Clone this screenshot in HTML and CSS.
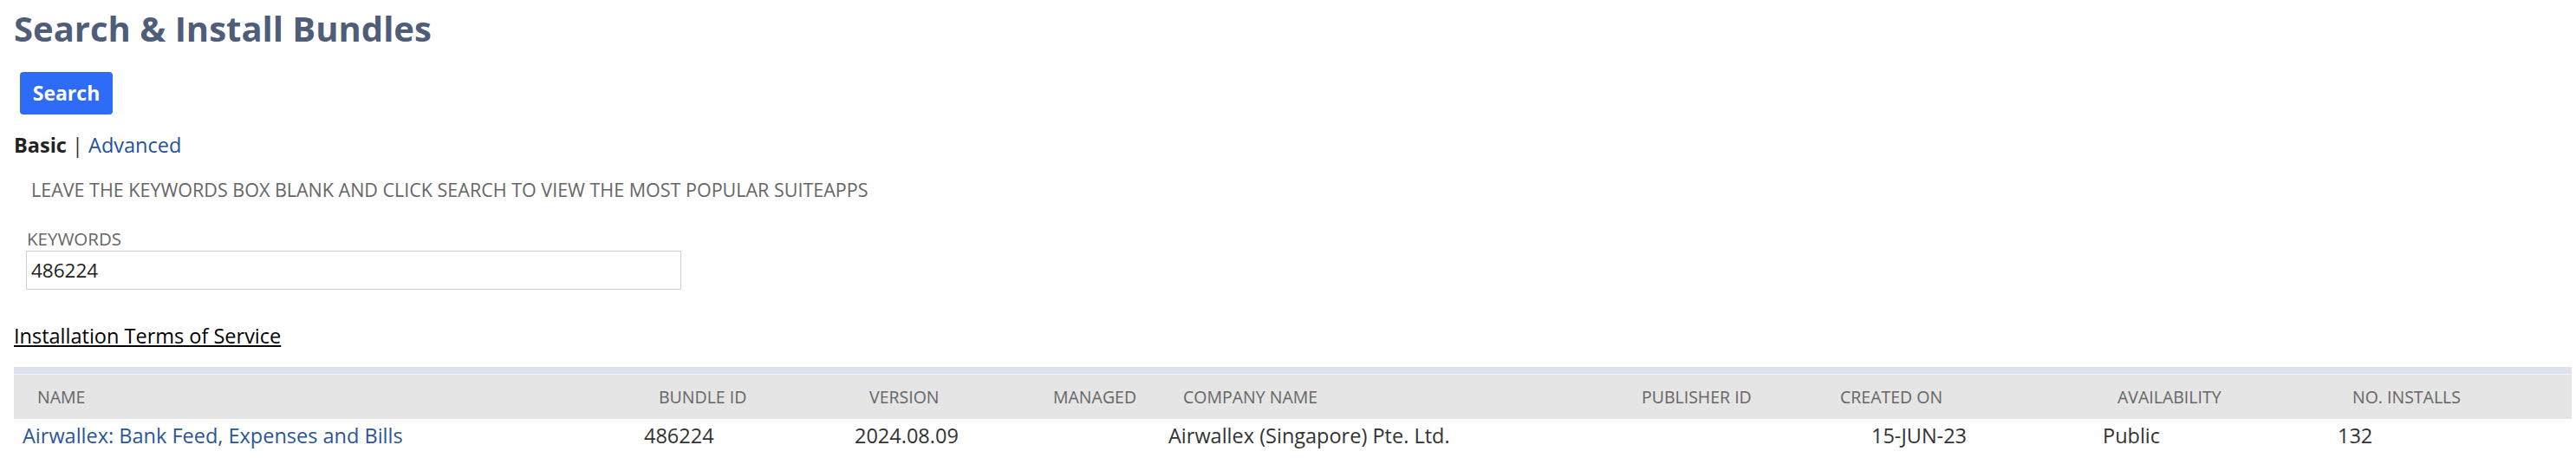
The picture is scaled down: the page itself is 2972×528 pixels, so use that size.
FILE: index.html
```html
<!DOCTYPE html>
<html>
<head>
<meta charset="utf-8">
<link rel="stylesheet" href="styles.css">
</head>
<body>
<div class="page">
  <h1 class="title">Search &amp; Install Bundles</h1>
  <div class="actions"><button class="btn">Search</button></div>
  <div class="tabs"><span class="tab-active">Basic</span> <span class="sep">|</span> <a class="tab-link" href="#">Advanced</a></div>
  <p class="hint">LEAVE THE KEYWORDS BOX BLANK AND CLICK SEARCH TO VIEW THE MOST POPULAR SUITEAPPS</p>
  <div class="field">
    <label class="field-label">KEYWORDS</label>
    <div class="input">486224</div>
  </div>
  <a class="terms" href="#">Installation Terms of Service</a>
  <div class="results">
    <div class="strip"></div>
    <div class="grid head">
      <div class="c c1">NAME</div>
      <div class="c c2">BUNDLE ID</div>
      <div class="c c3">VERSION</div>
      <div class="c c4">MANAGED</div>
      <div class="c c5">COMPANY NAME</div>
      <div class="c c6">PUBLISHER ID</div>
      <div class="c c7">CREATED ON</div>
      <div class="c c8">AVAILABILITY</div>
      <div class="c c9">NO. INSTALLS</div>
    </div>
    <div class="grid row">
      <div class="c c1"><a class="name-link" href="#">Airwallex: Bank Feed, Expenses and Bills</a></div>
      <div class="c c2">486224</div>
      <div class="c c3">2024.08.09</div>
      <div class="c c4"></div>
      <div class="c c5">Airwallex (Singapore) Pte. Ltd.</div>
      <div class="c c6"></div>
      <div class="c c7 date">15-JUN-23</div>
      <div class="c c8">Public</div>
      <div class="c c9">132</div>
    </div>
  </div>
</div>
</body>
</html>
```
FILE: styles.css
```css
html, body {
  margin: 0;
  padding: 0;
  background: #ffffff;
}
body {
  font-family: "Open Sans", "Liberation Sans", sans-serif;
  color: #333333;
}
.page {
  padding: 6px 5px 0 16px;
}
.title {
  margin: 0;
  font-size: 40px;
  line-height: 54px;
  font-weight: 700;
  color: #4f5d79;
}
.actions {
  margin-top: 23px;
  padding-left: 7px;
  display: flex;
}
.btn {
  font-family: "Open Sans", "Liberation Sans", sans-serif;
  font-size: 23px;
  font-weight: 700;
  line-height: 49px;
  height: 49px;
  width: 107px;
  padding: 0;
  border: 0;
  border-radius: 4px;
  background: #2e6bf6;
  color: #ffffff;
}
.tabs {
  margin-top: 20px;
  font-size: 23.5px;
  line-height: 30px;
  color: #222222;
}
.tab-active {
  font-weight: 700;
}
.sep {
  color: #333333;
}
.tab-link {
  color: #24519a;
  text-decoration: none;
}
.hint {
  margin: 23px 0 0 20px;
  font-size: 21.5px;
  line-height: 28px;
  color: #666666;
}
.field {
  margin-top: 30px;
  padding-left: 14px;
  display: flex;
  flex-direction: column;
  align-items: flex-start;
}
.field-label {
  font-size: 20.5px;
  line-height: 24px;
  color: #666666;
  padding-left: 1px;
}
.input {
  margin-top: 2px;
  box-sizing: border-box;
  width: 756px;
  height: 45px;
  border: 1px solid #cfcfcf;
  padding-left: 5px;
  font-size: 22.5px;
  line-height: 43px;
  color: #222222;
}
.terms {
  display: block;
  margin-top: 37px;
  font-size: 23.5px;
  line-height: 32px;
  color: #000000;
  text-decoration: underline;
  width: max-content;
}
.results {
  margin-top: 20px;
  width: 2951px;
}
.strip {
  height: 8px;
  background: #dfe3ec;
  border-bottom: 1px solid #f2f4f8;
}
.grid {
  display: grid;
  grid-template-columns: 717px 243px 212px 150px 529px 229px 320px 271px 280px;
}
.head {
  background: #e5e5e5;
  height: 51px;
  font-size: 19.5px;
  line-height: 52px;
  color: #666666;
}
.head .c {
  padding-left: 27px;
}
.row {
  font-size: 23.5px;
  line-height: 38px;
  color: #333333;
}
.row .c {
  padding-left: 10px;
}
.row .date {
  padding-left: 63px;
}
.name-link {
  color: #2b5597;
  text-decoration: none;
}
```
